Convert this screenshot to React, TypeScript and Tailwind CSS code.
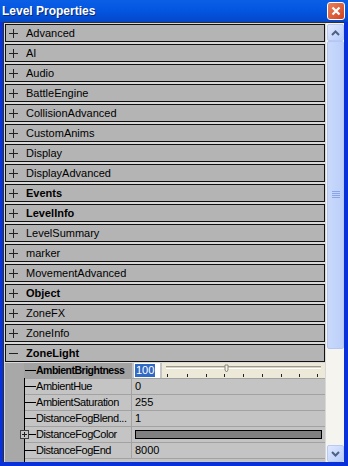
import React from "react";

type Group = { name: string; bold?: boolean; open?: boolean };

const groups: Group[] = [
  { name: "Advanced" },
  { name: "AI" },
  { name: "Audio" },
  { name: "BattleEngine" },
  { name: "CollisionAdvanced" },
  { name: "CustomAnims" },
  { name: "Display" },
  { name: "DisplayAdvanced" },
  { name: "Events", bold: true },
  { name: "LevelInfo", bold: true },
  { name: "LevelSummary" },
  { name: "marker" },
  { name: "MovementAdvanced" },
  { name: "Object", bold: true },
  { name: "ZoneFX" },
  { name: "ZoneInfo" },
  { name: "ZoneLight", bold: true, open: true },
];

type Prop = { label: string; value?: string; kind?: "slider" | "color"; expandable?: boolean };

const props: Prop[] = [
  { label: "AmbientBrightness", value: "100", kind: "slider" },
  { label: "AmbientHue", value: "0" },
  { label: "AmbientSaturation", value: "255" },
  { label: "DistanceFogBlend...", value: "1" },
  { label: "DistanceFogColor", kind: "color", expandable: true },
  { label: "DistanceFogEnd", value: "8000" },
];

const ticks = [167, 187, 206, 224, 243, 262, 281, 299, 317];

function Sign({ open }: { open?: boolean }) {
  return (
    <svg width="9" height="9" viewBox="0 0 9 9" className="shrink-0">
      <path d="M0 4.5h9" stroke="#202020" strokeWidth="1" />
      {!open && <path d="M4.5 0v9" stroke="#202020" strokeWidth="1" />}
    </svg>
  );
}

function Slider() {
  return (
    <div className="relative h-full flex-1 bg-[#ECE9D8]">
      <div className="absolute left-[4px] right-[4px] top-[3px] h-[3px] border-t border-[#9d9a8c] border-b border-b-white bg-[#d6d3c6]" />
      <svg className="absolute left-0 top-0" width="160" height="16">
        <path d="M63 2h3v5l-1.5 2L63 7z" fill="#f4f2ea" stroke="#8a877a" strokeWidth="1" />
        {ticks.map((t) => (
          <path key={t} d={`M${t - 162 + 0.5} 11v3`} stroke="#202020" strokeWidth="1" />
        ))}
      </svg>
    </div>
  );
}

function ScrollButton({ up }: { up?: boolean }) {
  return (
    <div className="flex h-[17px] w-[17px] items-center justify-center rounded-[2px] border border-[#b7c9f6] bg-gradient-to-br from-[#dfe8ff] to-[#b9cdf8]">
      <svg width="9" height="6" viewBox="0 0 9 6">
        <path
          d={up ? "M1 5L4.5 1.5 8 5" : "M1 1l3.5 3.5L8 1"}
          stroke="#4d6185"
          strokeWidth="2"
          fill="none"
        />
      </svg>
    </div>
  );
}

export default function App() {
  return (
    <div
      className="flex h-[466px] w-[348px] flex-col overflow-hidden bg-[#0831d9]"
      style={{ fontFamily: '"Liberation Sans", Arial, sans-serif' }}
    >
      {/* title bar */}
      <div className="flex h-[22px] shrink-0 items-center justify-between bg-gradient-to-b from-[#0a5fe6] via-[#0355e0] to-[#0347c9] pl-[2px] pr-[3px]">
        <span className="text-[12px] font-bold text-white [text-shadow:1px_1px_0_#0a2a7a]">Level Properties</span>
        <div className="flex h-[18px] w-[18px] items-center justify-center rounded-[3px] border border-white bg-gradient-to-br from-[#e8805d] to-[#d2411b]">
          <svg width="10" height="10" viewBox="0 0 10 10">
            <path d="M1.5 1.5l7 7M8.5 1.5l-7 7" stroke="white" strokeWidth="2.2" />
          </svg>
        </div>
      </div>

      {/* body */}
      <div className="ml-[3px] mr-[4px] mb-[4px] flex min-h-0 flex-1 border-l border-t border-[#303030] bg-[#d8d8d8]">
        <div className="flex min-w-0 flex-1 flex-col pl-[1px] pt-[1px]">
          {groups.map((g) => (
            <div
              key={g.name}
              className="mb-[2px] flex h-[18px] w-[320px] shrink-0 items-center border border-[#111] bg-[#b4b4b4] pl-[3px]"
            >
              <Sign open={g.open} />
              <span className={`ml-[8px] text-[11px] leading-none text-black ${g.bold ? "font-bold" : ""}`}>
                {g.name}
              </span>
            </div>
          ))}

          {/* property grid */}
          <div className="-mt-[1px] flex w-[320px] flex-1 bg-[#c4c4c4]">
            <div className="w-[19px] shrink-0 bg-[#a8a8a8]" />
            <div className="relative flex-1">
              <div className="absolute bottom-0 left-[0px] top-0 w-px bg-black" />
              {props.map((p, i) => {
                const sel = i === 0;
                return (
                  <div key={p.label} className="flex h-[16px] border-b border-[#a2a2a2]">
                    <div
                      className={`relative flex w-[108px] shrink-0 items-center overflow-visible border-r border-[#a2a2a2] ${sel ? "bg-[#a2a2a2]" : ""}`}
                    >
                      <div className="ml-px h-px w-[11px] shrink-0 bg-black" />
                      {p.expandable && (
                        <div className="absolute left-[-4px] top-[3px] flex h-[9px] w-[9px] items-center justify-center border border-[#404040] bg-[#c4c4c4]">
                          <svg width="7" height="7" viewBox="0 0 7 7">
                            <path d="M1 3.5h5M3.5 1v5" stroke="#202020" strokeWidth="1" />
                          </svg>
                        </div>
                      )}
                      <span
                        className={`whitespace-nowrap leading-none text-black ${sel ? "text-[10.5px] font-bold tracking-[-0.5px]" : "text-[11px] tracking-[-0.45px]"}`}
                      >
                        {p.label}
                      </span>
                    </div>
                    <div className="flex min-w-0 flex-1 items-center">
                      {p.kind === "slider" ? (
                        <div className="flex h-full w-full items-center">
                          <div className="ml-[2px] flex h-[15px] w-[26px] items-center border border-white bg-white">
                            <span className="bg-[#316ac5] px-[1px] text-[11px] leading-[13px] text-white">{p.value}</span>
                          </div>
                          <div className="ml-[2px] h-full flex-1">
                            <Slider />
                          </div>
                        </div>
                      ) : p.kind === "color" ? (
                        <div className="ml-[3px] mr-[3px] h-[9px] flex-1 border border-black bg-[#808080]" />
                      ) : (
                        <span className="ml-[3px] text-[11px] leading-none text-black">{p.value}</span>
                      )}
                    </div>
                  </div>
                );
              })}
            </div>
          </div>
        </div>

        {/* scrollbar */}
        <div className="flex w-[18px] shrink-0 flex-col bg-[#f5f4ef] pl-px pt-[1px]">
          <ScrollButton up />
          <div className="flex h-[308px] w-[17px] items-center justify-center rounded-[2px] border border-[#b3c7f5] bg-gradient-to-r from-[#c9d9fd] to-[#bccff9]">
            <svg width="8" height="8" viewBox="0 0 8 8">
              {[0.5, 2.5, 4.5, 6.5].map((y) => (
                <path key={y} d={`M0 ${y}h8`} stroke="#8aa4e6" strokeWidth="1" />
              ))}
            </svg>
          </div>
          <div className="flex-1" />
          <ScrollButton />
        </div>
      </div>
    </div>
  );
}
